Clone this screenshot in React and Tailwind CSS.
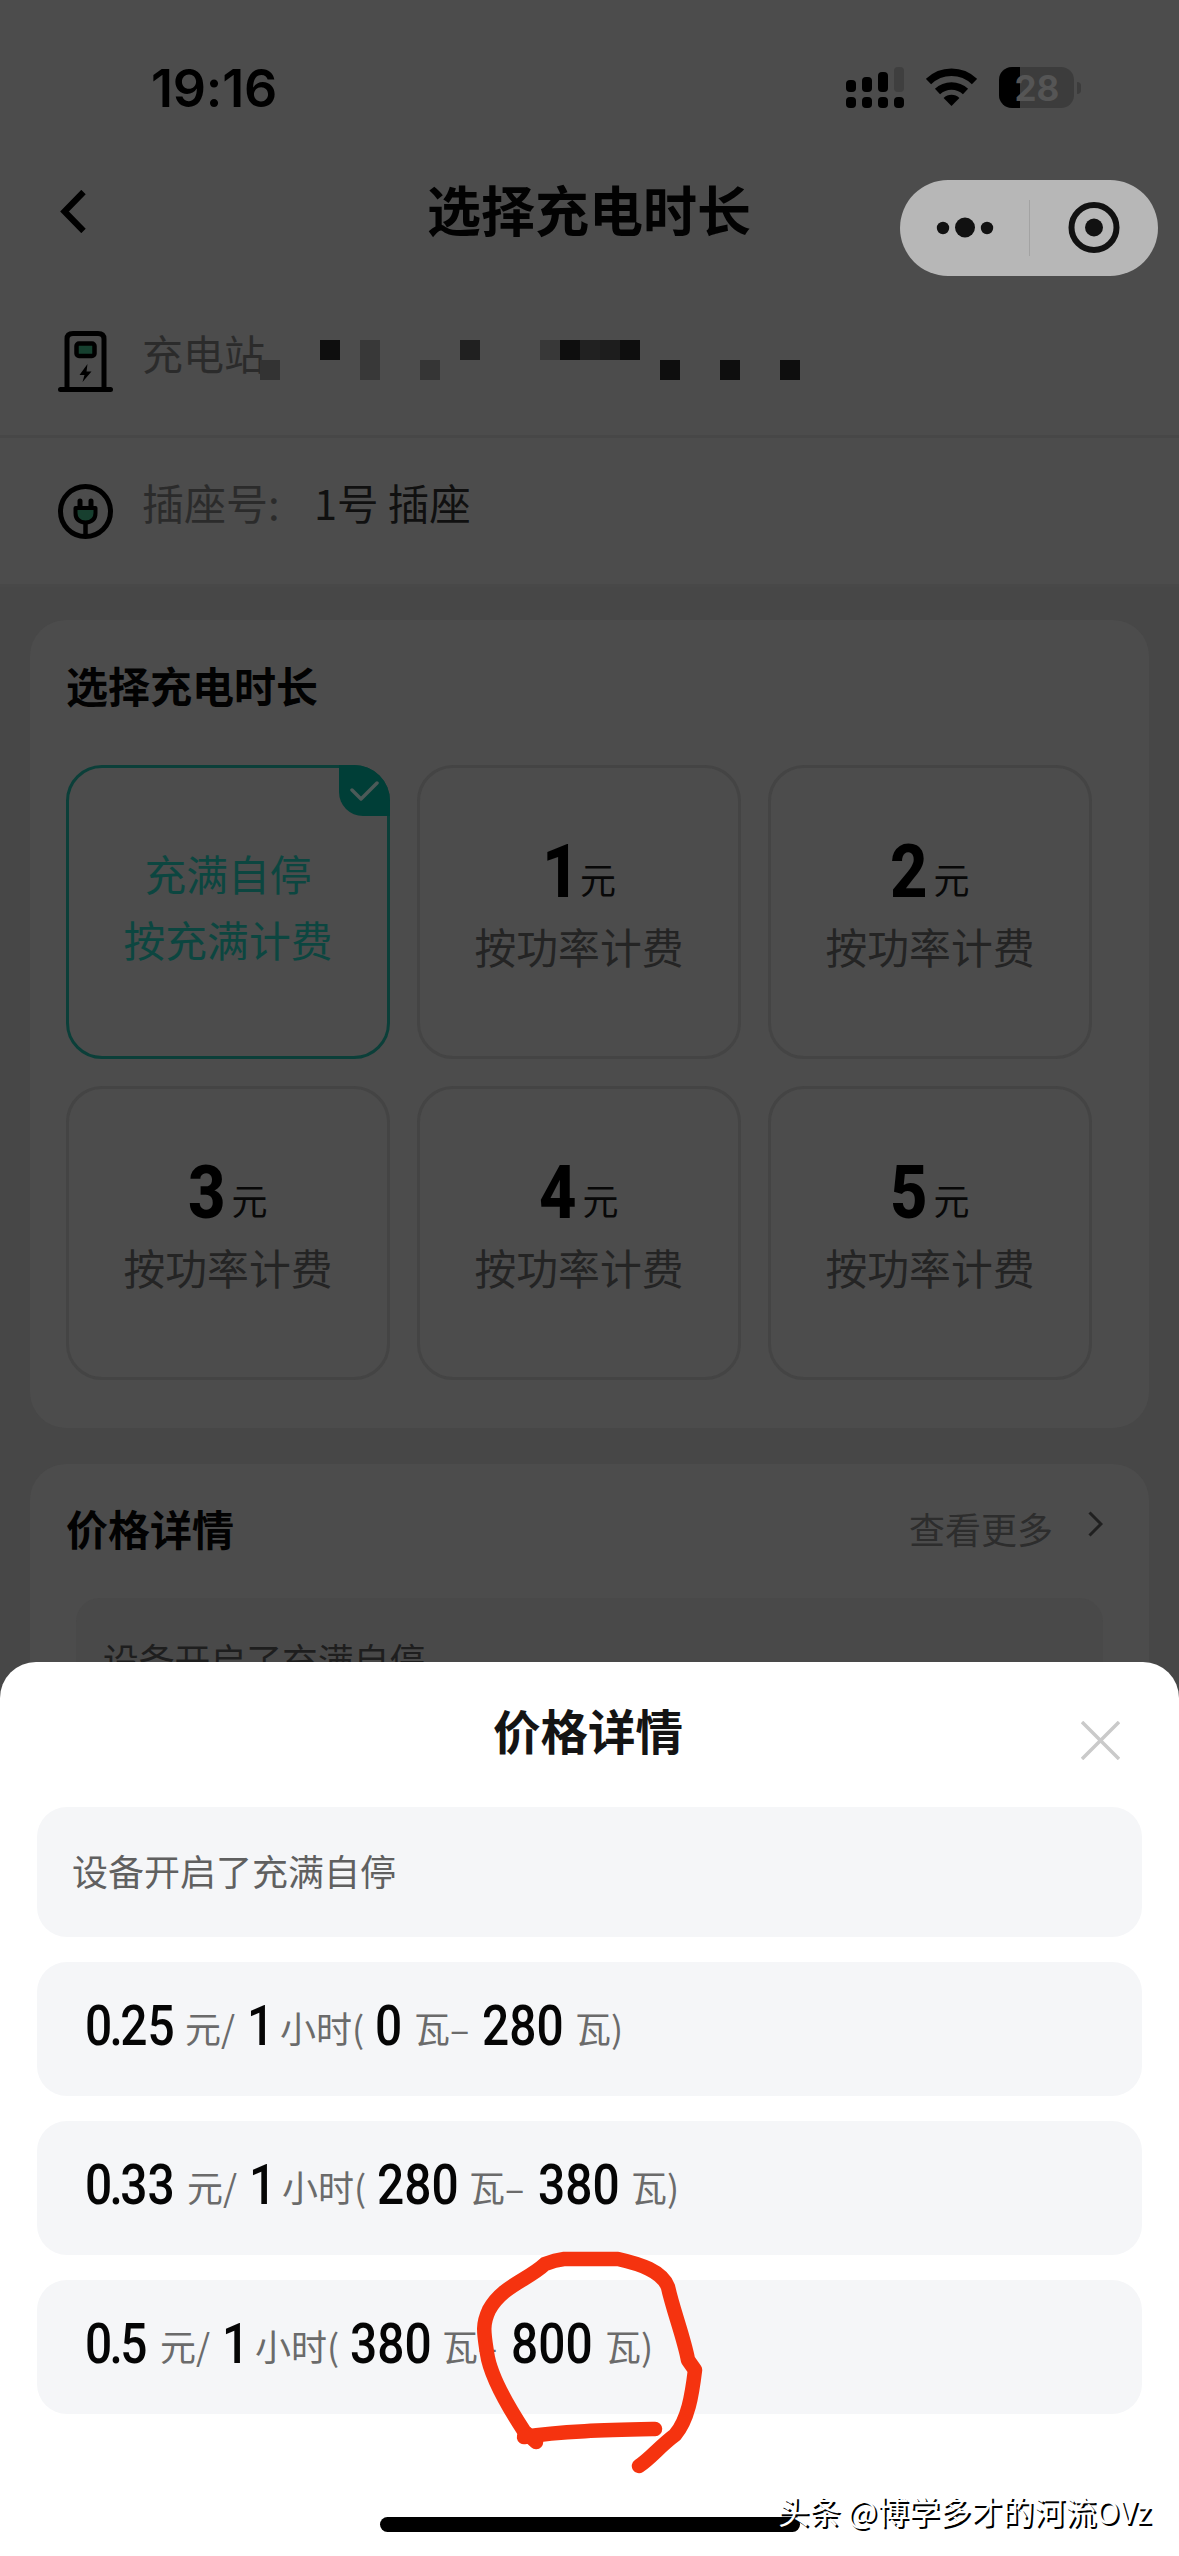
const CJK = "font-['Noto_Sans_CJK_SC',sans-serif]";

function StatusBar() {
  return (
    <div className="flex h-[132px] items-start pl-[151px] pr-[98px]">
      <div className="mt-[59px] w-[130px] whitespace-nowrap font-['Inter',sans-serif] text-[52px] font-semibold leading-[60px] tracking-[-0.2px] text-black">19:16</div>
      <svg className="ml-auto mt-[67px] h-[41px] w-[58px]" viewBox="0 0 58 41">
        <rect x="0" y="13" width="10" height="12" rx="4" />
        <rect x="16" y="10" width="10" height="15" rx="4" />
        <rect x="32" y="5" width="10" height="20" rx="4" />
        <rect x="48" y="0" width="10" height="25" rx="4" fill="#3f3f3f" />
        <rect x="0" y="30" width="10" height="11" rx="4" />
        <rect x="16" y="30" width="10" height="11" rx="4" />
        <rect x="32" y="30" width="10" height="11" rx="4" />
        <rect x="48" y="30" width="10" height="11" rx="4" />
      </svg>
      <svg className="ml-[22px] mt-[68px] h-[39px] w-[51px]" viewBox="0 0 51 39" fill="none" stroke="#000">
        <path d="M2.5 13.5 A33 33 0 0 1 48.5 13.5" strokeWidth="7.5" />
        <path d="M11.5 23.5 A20.5 20.5 0 0 1 39.5 23.5" strokeWidth="7.5" />
        <path d="M25.5 38 L17.6 30 A11.5 11.5 0 0 1 33.4 30 Z" fill="#000" stroke="none" />
      </svg>
      <div className="relative ml-[22px] mt-[67px] h-[41px] w-[75px] rounded-[13px] bg-[#3c3c3c]">
        <div className="h-full w-[21px] rounded-l-[13px] bg-black" />
        <div className="absolute -top-[2px] left-0 w-full pl-px text-center font-['Inter',sans-serif] text-[35px] font-bold leading-[46px] text-[#555]">28</div>
      </div>
      <div className="ml-[3px] mt-[82px] h-[12px] w-[4px] rounded-r-full bg-[#3c3c3c]" />
    </div>
  );
}

function NavBar() {
  return (
    <div className="flex h-[159px] items-start">
      <svg className="ml-[60px] mt-[58px] h-[43px] w-[26px]" viewBox="0 0 26 43" fill="none" stroke="#000" strokeWidth="6.2">
        <path d="M23.5 2 L4.5 21.5 L23.5 41" />
      </svg>
      <div className="ml-[341px] mt-[42px] w-[325px] whitespace-nowrap text-[54px] font-bold leading-[70px] text-[#020202]">选择充电时长</div>
      <div className="ml-[148px] mt-[48px] flex h-[96px] w-[258px] items-center rounded-full bg-[#b7b7b7]">
        <svg className="ml-[36px] h-[24px] w-[58px]" viewBox="0 0 58 24" fill="#111">
          <circle cx="7" cy="12" r="6.2" />
          <circle cx="29" cy="11.5" r="10" />
          <circle cx="51" cy="12" r="6.2" />
        </svg>
        <div className="ml-[35px] h-[56px] w-px bg-[#a3a3a3]" />
        <svg className="ml-[38px] h-[52px] w-[52px]" viewBox="0 0 52 52">
          <circle cx="26" cy="25.5" r="22.5" fill="none" stroke="#111" strokeWidth="6" />
          <circle cx="26" cy="25.5" r="9" fill="#111" />
        </svg>
      </div>
    </div>
  );
}

const MOSAIC = [
  [0, 20, 20, 20, "#333"], [60, 0, 20, 20, "#0e0e0e"], [100, 0, 20, 40, "#383838"],
  [160, 20, 20, 20, "#353535"], [200, 0, 20, 20, "#202020"], [280, 0, 20, 20, "#383838"],
  [300, 0, 20, 20, "#0e0e0e"], [320, 0, 20, 20, "#212121"], [340, 0, 20, 20, "#1d1d1d"],
  [360, 0, 20, 20, "#0e0e0e"], [400, 20, 20, 20, "#0e0e0e"], [460, 20, 20, 20, "#0e0e0e"],
  [520, 20, 20, 20, "#0e0e0e"],
];

function StationRows() {
  return (
    <div>
      <div className="flex h-[147px] items-start border-b-[3px] border-[#474747]">
        <svg className="ml-[58px] mt-[40px] h-[61px] w-[55px]" viewBox="0 0 55 61" fill="none" stroke="#000">
          <path d="M9 57 V8 Q9 2.5 15 2.5 H40 Q46 2.5 46 8 V57" strokeWidth="5" />
          <path d="M2.5 58.500 H52.500" strokeWidth="5" strokeLinecap="round" />
          <rect x="18.500" y="12.500" width="18" height="12.500" rx="2.5" fill="#16402f" strokeWidth="4.500" />
          <path d="M29.500 33 L21.500 44 H26.500 L24.500 51 L33.500 40.500 H28.500 Z" fill="#000" stroke="none" />
        </svg>
        <div className="ml-[29px] mt-[31px] w-[118px] whitespace-nowrap text-[41px] leading-[60px] text-[#2b2b2b]">充电站</div>
        <svg className="mt-[49px] h-[40px] w-[540px]" viewBox="0 0 540 40" shapeRendering="crispEdges">
          {MOSAIC.map(([x, y, w, h, c]) => <rect key={x} x={x} y={y} width={w} height={h} fill={c} />)}
        </svg>
      </div>
      <div className="flex h-[149px] items-start border-b-[3px] border-[#484848]">
        <svg className="ml-[58px] mt-[46px] h-[55px] w-[55px]" viewBox="0 0 55 55" fill="none" stroke="#000">
          <circle cx="27.500" cy="27.500" r="25" strokeWidth="5" />
          <path d="M22 17 V23 M33 17 V23" strokeWidth="5" strokeLinecap="round" />
          <path d="M17.500 24 H37.500 V29 Q37.500 38 27.500 38.500 Q17.500 38 17.500 29 Z" fill="#173f2f" strokeWidth="4" strokeLinejoin="round" />
          <path d="M27.500 38 V52" strokeWidth="4.500" />
        </svg>
        <div className="ml-[29px] mt-[34px] w-[172px] whitespace-nowrap text-[42px] leading-[60px] text-[#2b2b2b]">插座号:</div>
        <div className="mt-[34px] whitespace-nowrap text-[41.5px] leading-[60px] text-[#101010]">1号 插座</div>
      </div>
    </div>
  );
}

function Option({ amount }) {
  return (
    <div className="flex h-[294px] flex-col items-center rounded-[36px] border-[3px] border-[#444]">
      <div className="mt-[68px] flex h-[72px] items-baseline justify-center">
        <span className={`inline-block origin-left scale-x-[0.88] font-['Roboto',sans-serif] text-[74px] font-extrabold leading-[72px] text-black ${amount === 1 ? "w-[38px]" : "w-[43px]"}`}>{amount}</span>
        <span className="-translate-y-[3px] text-[36px] leading-[40px] text-[#080808]">元</span>
      </div>
      <div className="mt-[8px] whitespace-nowrap text-[41.8px] leading-[60px] text-[#242424]">按功率计费</div>
    </div>
  );
}

function DurationCard() {
  return (
    <div className="mx-[30px] mt-[33px] h-[808px] rounded-[36px] bg-[#4c4c4c] px-[36px] pt-[35px]">
      <div className="text-[42px] font-bold leading-[60px] text-[#020202]">选择充电时长</div>
      <div className="mt-[50px] grid w-[1026px] grid-cols-3 gap-[27px]">
        <div className="relative flex h-[294px] flex-col items-center rounded-[36px] border-[3px] border-[#0b3f39] text-[41.8px] text-[#0c4640]">
          <div className="mt-[72px] whitespace-nowrap leading-[66px]">充满自停</div>
          <div className="whitespace-nowrap leading-[66px]">按充满计费</div>
          <div className="absolute -right-[3px] -top-[3px] flex h-[51px] w-[51px] items-center justify-center rounded-bl-[24px] rounded-tr-[36px] bg-[#003e37]">
            <svg className="h-[22px] w-[30px]" viewBox="0 0 30 22" fill="none" stroke="#4c5a58" strokeWidth="3.5" strokeLinecap="round" strokeLinejoin="round">
              <path d="M2 10 L11 19 L27 3" />
            </svg>
          </div>
        </div>
        {[1, 2, 3, 4, 5].map((n) => <Option key={n} amount={n} />)}
      </div>
    </div>
  );
}

function PriceCard() {
  return (
    <div className="mx-[30px] mt-[36px] h-[400px] rounded-t-[36px] bg-[#4c4c4c] pt-[34px]">
      <div className="flex h-[60px] items-center pl-[36px] pr-[46px]">
        <div className="text-[42px] font-bold leading-[60px] text-[#020202]">价格详情</div>
        <div className="ml-auto text-[36px] leading-[60px] text-[#2d2d2d]">查看更多</div>
        <svg className="ml-[35px] h-[26px] w-[15px] -translate-y-[4px]" viewBox="0 0 15 26" fill="none" stroke="#202020" strokeWidth="3">
          <path d="M1.500 1.500 L13 13 L1.500 24.500" />
        </svg>
      </div>
      <div className="mx-[46px] mt-[40px] h-[200px] rounded-[24px] bg-[#494949] pl-[27px] pt-[31px] text-[35.8px] leading-[60px] text-[#1e1e1e]">设备开启了充满自停</div>
    </div>
  );
}

/* Each segment: text, cell width, and whether it is a figure. */
const RATES = [
  [["0.25", 100, 1], ["元/", 62], ["1", 33, 1], ["小时(", 95], ["0", 39, 1], ["瓦–", 68], ["280", 93, 1], ["瓦)", 60]],
  [["0.33", 102, 1], ["元/", 62], ["1", 33, 1], ["小时(", 95], ["280", 92, 1], ["瓦–", 69], ["380", 93, 1], ["瓦)", 60]],
  [["0.5", 75, 1], ["元/", 62], ["1", 33, 1], ["小时(", 95], ["380", 92, 1], ["瓦–", 69], ["800", 94, 1], ["瓦)", 60]],
];

function Figure({ value }) {
  const [whole, fraction] = value.split(".");
  return (
    <span className="inline-block origin-left translate-y-[2px] scale-x-[0.87] font-['Roboto',sans-serif] text-[55px] font-medium leading-[64px] text-[#050505]">
      {whole}
      {fraction && <span className="-ml-[3px] -mr-[3px]">.</span>}
      {fraction}
    </span>
  );
}

function RateRow({ parts }) {
  return (
    <div className="flex h-[134px] items-baseline whitespace-nowrap rounded-[30px] bg-[#f5f6f8] pl-[48px] pt-[30px]">
      {parts.map(([text, width, figure], i) => (
        <span key={i} className="shrink-0" style={{ width }}>
          {figure ? <Figure value={text} /> : <span className="text-[36px] leading-[40px] text-[#6b6b6b]">{text}</span>}
        </span>
      ))}
    </div>
  );
}

function PriceSheet() {
  return (
    <div className="absolute inset-x-0 bottom-0 h-[894px] rounded-t-[36px] bg-white px-[37px]">
      <div className="flex h-[145px] items-start">
        <div className="ml-[456px] mt-[38px] w-[192px] whitespace-nowrap text-[47.5px] font-bold leading-[60px] text-[#141414]">价格详情</div>
        <svg className="ml-auto mr-[22px] mt-[59px] h-[39px] w-[39px]" viewBox="0 0 39 39" fill="none" stroke="#cacaca" strokeWidth="3.500">
          <path d="M1 1 L38 38 M38 1 L1 38" />
        </svg>
      </div>
      <div className="flex flex-col gap-[25px]">
        <div className="h-[130px] rounded-[30px] bg-[#f5f6f8] pl-[35px] pt-[33px] text-[36px] leading-[60px] text-[#606060]">设备开启了充满自停</div>
        {RATES.map((parts, i) => <RateRow key={i} parts={parts} />)}
      </div>
      <div className="absolute bottom-[24px] left-[380px] h-[15px] w-[420px] rounded-full bg-black" />
    </div>
  );
}

export default function App() {
  return (
    <div className={`relative h-[2556px] w-[1179px] overflow-hidden bg-[#474747] ${CJK}`}>
      <div className="bg-[#4c4c4c]">
        <StatusBar />
        <NavBar />
        <StationRows />
      </div>
      <DurationCard />
      <PriceCard />
      <PriceSheet />
      <svg className="absolute left-[470px] top-[2240px] h-[240px] w-[240px]" viewBox="470 2240 240 240" fill="none" stroke="#f5330f" strokeLinecap="round" strokeLinejoin="round">
        <path d="M536 2442 L524 2431 C505 2402 490 2375 487 2353 C484 2333 482 2325 489 2310 C502 2286 528 2280 545 2264 Q555 2260 564 2259 H618 C640 2264 662 2271 668 2287 C673 2310 684 2338 688 2360 L695 2370 C692 2395 688 2420 675 2435 C660 2446 651 2458 639 2466" strokeWidth="14.500" />
        <path d="M524 2437 C560 2431 610 2430 655 2429" strokeWidth="14.500" />
      </svg>
      <div className="absolute left-[778px] top-[2490px] whitespace-nowrap text-[31.3px] leading-[42px] text-white [text-shadow:2px_2px_0_#000]">头条 @博学多才的河流OVz</div>
    </div>
  );
}
